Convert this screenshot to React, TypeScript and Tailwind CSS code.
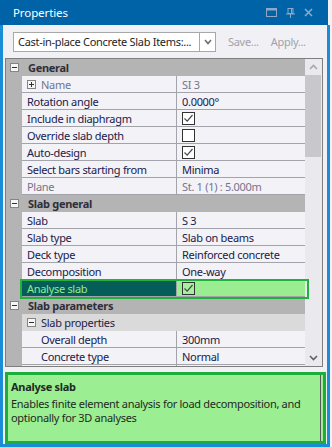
import React from "react";

type Row =
  | { kind: "header"; label: string }
  | { kind: "sub"; label: string }
  | {
      kind: "prop";
      label: string;
      value?: string;
      check?: boolean;
      disabled?: boolean;
      plus?: boolean;
      indent?: boolean;
      highlight?: boolean;
    };

const rows: Row[] = [
  { kind: "header", label: "General" },
  { kind: "prop", label: "Name", value: "SI 3", disabled: true, plus: true },
  { kind: "prop", label: "Rotation angle", value: "0.0000°" },
  { kind: "prop", label: "Include in diaphragm", check: true },
  { kind: "prop", label: "Override slab depth", check: false },
  { kind: "prop", label: "Auto-design", check: true },
  { kind: "prop", label: "Select bars starting from", value: "Minima" },
  { kind: "prop", label: "Plane", value: "St. 1 (1) : 5.000m", disabled: true },
  { kind: "header", label: "Slab general" },
  { kind: "prop", label: "Slab", value: "S 3" },
  { kind: "prop", label: "Slab type", value: "Slab on beams" },
  { kind: "prop", label: "Deck type", value: "Reinforced concrete" },
  { kind: "prop", label: "Decomposition", value: "One-way" },
  { kind: "prop", label: "Analyse slab", check: true, highlight: true },
  { kind: "header", label: "Slab parameters" },
  { kind: "sub", label: "Slab properties" },
  { kind: "prop", label: "Overall depth", value: "300mm", indent: true },
  { kind: "prop", label: "Concrete type", value: "Normal", indent: true },
  { kind: "prop", label: "", value: "", indent: true },
];

const ToggleBox = ({ plus }: { plus?: boolean }) => (
  <div className="w-[9px] h-[9px] border border-[#858585] bg-[#f6f6f6] flex items-center justify-center shrink-0">
    <svg width="7" height="7" viewBox="0 0 7 7">
      <line x1="1" y1="3.5" x2="6" y2="3.5" stroke="#303030" strokeWidth="1" />
      {plus && <line x1="3.5" y1="1" x2="3.5" y2="6" stroke="#303030" strokeWidth="1" />}
    </svg>
  </div>
);

const CheckBox = ({ on, green }: { on: boolean; green?: boolean }) => (
  <div
    className={`w-[13px] h-[13px] border border-[#333333] flex items-center justify-center ${
      green ? "bg-[#a4f09c]" : "bg-white"
    }`}
  >
    {on && (
      <svg width="11" height="11" viewBox="0 0 11 11">
        <polyline points="1.5,5.5 4.2,8.2 9.5,2" fill="none" stroke="#4a4a4a" strokeWidth="1.2" />
      </svg>
    )}
  </div>
);

const GridRow = ({ row }: { row: Row }) => {
  if (row.kind === "header") {
    return (
      <div className="flex h-[17px] shrink-0">
        <div className="w-[16px] bg-[#b4b4b4] flex items-center justify-center">
          <ToggleBox />
        </div>
        <div className="flex-1 bg-[#b4b4b4] pl-[6px] flex items-center font-bold text-[#2e2e3a]">
          {row.label}
        </div>
      </div>
    );
  }
  if (row.kind === "sub") {
    return (
      <div className="flex h-[17px] shrink-0">
        <div className="w-[16px] bg-[#b4b4b4]" />
        <div className="flex-1 bg-[#dadada] pl-[5px] flex items-center gap-[5px] text-[#22224a]">
          <ToggleBox />
          <span>{row.label}</span>
        </div>
      </div>
    );
  }
  const hl = row.highlight;
  const textColor = row.disabled ? "text-[#74748e]" : "text-[#20204a]";
  return (
    <div className="flex h-[17px] shrink-0">
      <div className="w-[16px] bg-[#b4b4b4]" />
      <div className="flex-1 flex border-b border-[#a3a3ab]">
        <div
          className={`w-[155px] border-r border-[#a3a3ab] flex items-center gap-[5px] ${
            row.indent ? "pl-[19px]" : "pl-[5px]"
          } ${hl ? "bg-[#055d58] text-[#92ec8c]" : `bg-[#f2f2f7] ${textColor}`}`}
        >
          {row.plus && <ToggleBox plus />}
          <span className="whitespace-nowrap">{row.label}</span>
        </div>
        <div
          className={`flex-1 pl-[5px] flex items-center whitespace-nowrap ${
            hl ? "bg-[#9aee91]" : "bg-[#f2f2f7]"
          } ${textColor}`}
        >
          {row.check !== undefined ? <CheckBox on={row.check} green={hl} /> : row.value}
        </div>
      </div>
    </div>
  );
};

export default function App() {
  return (
    <div
      className="w-[332px] h-[447px] bg-[#f0f0f5] flex flex-col text-[11px] leading-none tracking-[-0.3px] overflow-hidden"
      style={{ fontFamily: '"Noto Sans", "Liberation Sans", sans-serif' }}
    >
      {/* title bar */}
      <div className="h-[25px] w-[328px] shrink-0 bg-[#0063a8] flex items-center pl-[13px] pr-[15px]">
        <span className="text-white text-[11.5px] tracking-[-0.1px] flex-1">Properties</span>
        <div className="flex items-center gap-[9px]">
          <svg width="11" height="9" viewBox="0 0 11 9">
            <rect x="0.5" y="0.5" width="10" height="8" fill="none" stroke="#8ea9c8" strokeWidth="1" />
            <line x1="0" y1="1.5" x2="11" y2="1.5" stroke="#8ea9c8" strokeWidth="2" />
          </svg>
          <svg width="9" height="10" viewBox="0 0 9 10">
            <rect x="2" y="0.5" width="5" height="5" fill="none" stroke="#8ea9c8" strokeWidth="1" />
            <line x1="5.5" y1="0.5" x2="5.5" y2="5.5" stroke="#8ea9c8" strokeWidth="1" />
            <line x1="0" y1="6" x2="9" y2="6" stroke="#8ea9c8" strokeWidth="1" />
            <line x1="4.5" y1="6" x2="4.5" y2="10" stroke="#8ea9c8" strokeWidth="1" />
          </svg>
          <svg width="9" height="9" viewBox="0 0 9 9">
            <path d="M1 1 L8 8 M8 1 L1 8" stroke="#8ea9c8" strokeWidth="1.6" />
          </svg>
        </div>
      </div>

      {/* body */}
      <div className="flex-1 w-[330px] flex flex-col border-l-[3px] border-r-[3px] border-b-[3px] border-[#1b8dd6]">
        {/* toolbar */}
        <div className="h-[33px] shrink-0 flex items-center pl-[10px]">
          <div className="w-[203px] h-[20px] bg-white border border-[#a8a8a8] flex text-[#1e1e1e]">
            <div className="flex-1 pl-[4px] flex items-center whitespace-nowrap overflow-hidden">
              Cast-in-place Concrete Slab Items:...
            </div>
            <div className="w-[16px] border-l border-[#a8a8a8] flex items-center justify-center">
              <svg width="8" height="6" viewBox="0 0 8 6">
                <polyline points="1,1 4,4.5 7,1" fill="none" stroke="#6a6a6a" strokeWidth="1.5" />
              </svg>
            </div>
          </div>
          <span className="ml-[12px] text-[#a2a2a8]">Save...</span>
          <span className="ml-[12px] text-[#a2a2a8]">Apply...</span>
        </div>

        {/* property grid */}
        <div className="ml-[2px] w-[318px] h-[309px] shrink-0 border border-[#7e7e7e] flex relative">
          <div className="flex-1 h-[307px] overflow-hidden flex flex-col">
            {rows.map((r, i) => (
              <GridRow key={i} row={r} />
            ))}
          </div>
          <div className="w-[17px] bg-[#e9e9ee] flex flex-col">
            <div className="h-[16px] flex items-center justify-center">
              <svg width="9" height="6" viewBox="0 0 9 6">
                <polyline points="1,5 4.5,1.5 8,5" fill="none" stroke="#a8a8ae" strokeWidth="1.6" />
              </svg>
            </div>
            <div className="mr-[1px] h-[82px] bg-[#c8c8cc]" />
            <div className="flex-1" />
            <div className="h-[16px] flex items-center justify-center">
              <svg width="9" height="6" viewBox="0 0 9 6">
                <polyline points="1,1 4.5,4.5 8,1" fill="none" stroke="#606066" strokeWidth="1.6" />
              </svg>
            </div>
          </div>
          {/* highlight frame */}
          <div className="absolute left-[14px] top-[220px] w-[289px] h-[20px] border-2 border-[#20b23c] pointer-events-none" />
        </div>

        {/* description */}
        <div className="mt-[5px] ml-[2px] w-[321px] h-[72px] border-[3px] border-[#1dae3a] bg-[#9bee92]">
          <div className="h-full mr-[2px] border-r border-[#5a5a5a] pl-[3px] pt-[4px] text-[#1f2a1f]">
            <div className="font-bold leading-[16px]">Analyse slab</div>
            <div className="leading-[14px] mt-[2px]">
              Enables finite element analysis for load decomposition, and optionally for 3D analyses
            </div>
          </div>
        </div>
      </div>
    </div>
  );
}
